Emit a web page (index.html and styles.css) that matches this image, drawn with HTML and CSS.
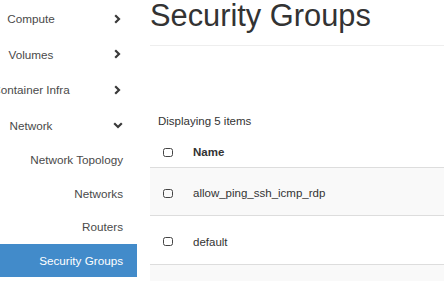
FILE: index.html
```html
<!DOCTYPE html>
<html lang="en">
<head>
  <meta charset="UTF-8">
  <title>Security Groups</title>
  <link rel="stylesheet" href="styles.css">
</head>
<body>
  <div class="sidebar">
    <div class="nav-item">
      <span class="nav-item__label">Compute</span>
      <svg class="chevron chevron--right" width="7" height="10" viewBox="0 0 7 10"><polyline points="1.2,1.2 5,5 1.2,8.8" /></svg>
    </div>
    <div class="nav-item">
      <span class="nav-item__label">Volumes</span>
      <svg class="chevron chevron--right" width="7" height="10" viewBox="0 0 7 10"><polyline points="1.2,1.2 5,5 1.2,8.8" /></svg>
    </div>
    <div class="nav-item">
      <span class="nav-item__label">Container Infra</span>
      <svg class="chevron chevron--right" width="7" height="10" viewBox="0 0 7 10"><polyline points="1.2,1.2 5,5 1.2,8.8" /></svg>
    </div>
    <div class="nav-item">
      <span class="nav-item__label">Network</span>
      <svg class="chevron chevron--down" width="10" height="7" viewBox="0 0 10 7"><polyline points="1.2,1.2 5,5 8.8,1.2" /></svg>
    </div>
    <div class="nav-sub">Network Topology</div>
    <div class="nav-sub">Networks</div>
    <div class="nav-sub">Routers</div>
    <div class="nav-sub nav-sub--active">Security Groups</div>
  </div>

  <div class="main">
    <h1 class="page-title">Security Groups</h1>
    <div class="toolbar">Displaying 5 items</div>
    <table class="table">
      <thead>
        <tr>
          <th class="table__check"><span class="checkbox"></span></th>
          <th>Name</th>
        </tr>
      </thead>
      <tbody>
        <tr class="table__row--odd">
          <td class="table__check"><span class="checkbox"></span></td>
          <td>allow_ping_ssh_icmp_rdp</td>
        </tr>
        <tr>
          <td class="table__check"><span class="checkbox"></span></td>
          <td>default</td>
        </tr>
        <tr class="table__row--odd">
          <td class="table__check"><span class="checkbox"></span></td>
          <td>&nbsp;</td>
        </tr>
      </tbody>
    </table>
  </div>
</body>
</html>
```

FILE: styles.css
```css
body {
  margin: 0;
  display: flex;
  font-family: "Liberation Sans", Arial, sans-serif;
  color: #333;
  background: #fff;
  overflow: hidden;
}

/* sidebar */
.sidebar {
  width: 137px;
  flex: none;
  padding-top: 1px;
  font-size: 11.7px;
  color: #4a4a4a;
}
.nav-item {
  height: 35.5px;
  display: flex;
  align-items: center;
}
.nav-item__label {
  width: 62px;
  display: flex;
  justify-content: center;
  white-space: nowrap;
}
.chevron {
  fill: none;
  stroke: #3a3a3a;
  stroke-width: 2.2;
}
.chevron--right {
  margin-left: 52px;
}
.chevron--down {
  margin-left: 51px;
}
.nav-sub {
  height: 33.5px;
  display: flex;
  align-items: center;
  justify-content: flex-end;
  padding-right: 14px;
  white-space: nowrap;
}
.nav-sub--active {
  background: #428bca;
  color: #fff;
}

/* main */
.main {
  flex: 1;
  margin-left: 13px;
}
.page-title {
  margin: 0;
  padding-bottom: 13px;
  border-bottom: 1px solid #eee;
  font-size: 30.8px;
  font-weight: normal;
  line-height: 32px;
  color: #333;
  white-space: nowrap;
}
.toolbar {
  margin-top: 67px;
  padding-left: 8px;
  font-size: 11.5px;
  line-height: 16px;
}
.table {
  margin-top: 9px;
  width: 100%;
  border-collapse: collapse;
  font-size: 11.5px;
}
.table th,
.table td {
  text-align: left;
  padding: 0;
  vertical-align: middle;
}
.table thead tr {
  height: 29px;
}
.table th {
  font-weight: bold;
}
.table tbody tr {
  height: 48.5px;
  border-top: 1px solid #ddd;
}
.table tbody td {
  padding-top: 4px;
}
.table__row--odd {
  background: #f9f9f9;
}
.table__check {
  width: 30px;
  padding-left: 13px !important;
}
.checkbox {
  display: block;
  width: 8px;
  height: 7px;
  border: 1.2px solid #444;
  border-radius: 2.5px;
}
```
